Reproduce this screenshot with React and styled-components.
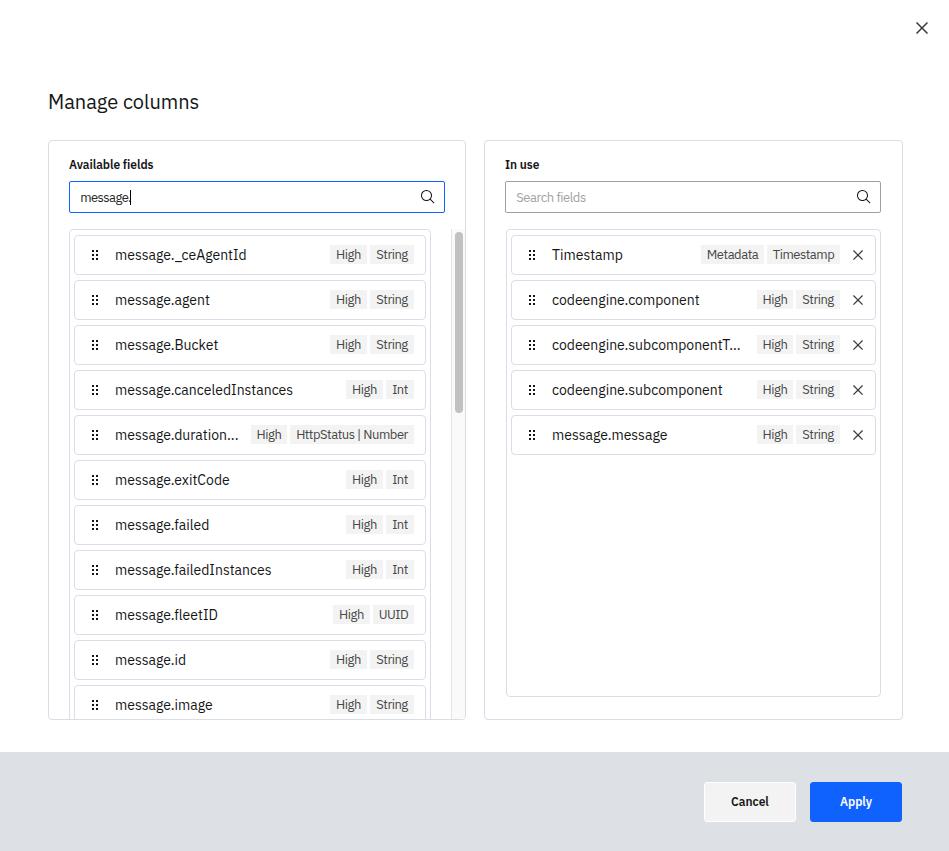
import React from "react";
import styled, { createGlobalStyle } from "styled-components";

const GlobalStyle = createGlobalStyle`
  * { box-sizing: border-box; }
  html, body { margin: 0; padding: 0; background: #fff; }
  body { font-family: "IBM Plex Sans", Roboto, "Noto Sans", sans-serif; color: #161616; overflow: hidden; }
  button { font-family: inherit; }
`;

const Dialog = styled.div`
  width: 949px;
  height: 851px;
  display: flex;
  flex-direction: column;
  background: #fff;
`;

const TopBar = styled.header`
  height: 56px;
  flex: none;
  display: flex;
  align-items: center;
  justify-content: flex-end;
  padding-right: 15px;
`;

const IconButton = styled.button`
  display: flex;
  align-items: center;
  justify-content: center;
  width: ${(p) => p.$size}px;
  height: ${(p) => p.$size}px;
  padding: 0;
  border: 0;
  background: none;
  color: #393939;
`;

const Title = styled.h1`
  margin: 32px 0 0 48px;
  height: 52px;
  flex: none;
  font-size: 20px;
  line-height: 28px;
  font-weight: 400;
  letter-spacing: -0.03px;
`;

const Panels = styled.main`
  flex: none;
  display: grid;
  grid-template-columns: 418px 419px;
  column-gap: 18px;
  height: 580px;
  padding-left: 48px;
`;

const Panel = styled.section`
  display: flex;
  flex-direction: column;
  min-height: 0;
  border: 1px solid #d9dde8;
  border-radius: 4px;
  overflow: hidden;
`;

const PanelTitle = styled.h2`
  margin: 14px 20px 6px;
  flex: none;
  font-size: 12px;
  line-height: 20px;
  font-weight: 600;
  letter-spacing: -0.06px;
`;

const SearchBox = styled.div`
  display: flex;
  flex: none;
  align-items: center;
  width: 376px;
  height: 32px;
  margin-left: 20px;
  padding: 0 8px 0 10px;
  border: 1px solid ${(p) => (p.$active ? "#0f62fe" : "#9aa1ad")};
  border-radius: 2px;
  font-size: 13px;
  line-height: 16px;
  letter-spacing: ${(p) => (p.$active ? -0.56 : -0.44)}px;
  color: ${(p) => (p.$active ? "#262626" : "#a2a2a2")};
`;

const SearchText = styled.span`
  padding: 1px 0 0 0.2px;
`;

const Caret = styled.span`
  width: 1px;
  height: 15px;
  margin-left: -0.8px;
  background: #000;
`;

const SearchIconSlot = styled.span`
  display: flex;
  margin-left: auto;
  color: #161616;
`;

const ScrollArea = styled.div`
  display: flex;
  justify-content: space-between;
  flex: 1;
  min-height: 0;
  margin: 16px 0 0 20px;
  overflow: hidden;
`;

const FieldList = styled.ul`
  width: 362px;
  height: 700px;
  margin: 0;
  padding: 5px 4px;
  list-style: none;
  border: 1px solid #d9dde8;
  border-radius: 4px;
  display: flex;
  flex-direction: column;
  gap: 5px;
`;

const InUseList = styled(FieldList)`
  width: 375px;
  height: 468px;
  margin: 16px 0 0 21px;
`;

const Row = styled.li`
  display: flex;
  align-items: center;
  flex: none;
  height: 40px;
  padding: 0 ${(p) => (p.$removable ? 9 : 11)}px 0 12px;
  border: 1px solid #d9dde8;
  border-radius: 4px;
`;

const FieldName = styled.span`
  flex: 1;
  min-width: 0;
  margin-left: 12px;
  font-size: 14px;
  line-height: 20px;
  white-space: nowrap;
`;

const Tags = styled.span`
  display: flex;
  gap: 3px;
  margin-bottom: 1px;
`;

const Tag = styled.span`
  width: ${(p) => p.$width}px;
  height: 19px;
  background: #f3f3f3;
  color: #474747;
  font-size: 13px;
  line-height: 19px;
  letter-spacing: -0.47px;
  text-align: center;
  white-space: nowrap;
`;

const Remove = styled(IconButton)`
  margin-left: 10px;
`;

const ScrollTrack = styled.div`
  width: 14px;
  padding: 3px 0 0 3px;
  background: #fafafa;
  border-left: 1px solid #e4e4e8;
`;

const ScrollThumb = styled.div`
  width: 8px;
  height: 181px;
  border-radius: 4px;
  background: #c1c1c1;
`;

const Footer = styled.footer`
  display: flex;
  justify-content: flex-end;
  gap: 14px;
  margin-top: 32px;
  height: 99px;
  padding: 30px 47px 0 0;
  background: #dde0e5;
`;

const ActionButton = styled.button`
  width: 92px;
  height: 40px;
  padding: 0;
  border: 1px solid ${(p) => (p.$primary ? "#0f62fe" : "#fff")};
  border-radius: 3px;
  background: ${(p) => (p.$primary ? "#0f62fe" : "#f3f3f3")};
  color: ${(p) => (p.$primary ? "#fff" : "#161616")};
  font-size: 12px;
  line-height: 16px;
  font-weight: 600;
`;

const CloseGlyph = styled.svg`
  flex: none;
`;

const CloseIcon = ({ size }) => (
  <CloseGlyph width={size} height={size} viewBox="0 0 32 32" fill="currentColor">
    <path d="M24 9.4 22.6 8 16 14.6 9.4 8 8 9.4l6.6 6.6L8 22.6 9.4 24l6.6-6.6 6.6 6.6 1.4-1.4-6.6-6.6z" />
  </CloseGlyph>
);

const SearchIcon = () => (
  <svg width="16" height="16" viewBox="0 0 32 32" fill="currentColor">
    <path d="m29 27.586-7.552-7.552a11.018 11.018 0 1 0-1.414 1.414L27.586 29ZM4 13a9 9 0 1 1 9 9 9.01 9.01 0 0 1-9-9Z" />
  </svg>
);

const DragIcon = () => (
  <svg width="16" height="16" viewBox="0 0 16 16" fill="#161616" shapeRendering="crispEdges">
    {[3, 7, 11].map((y) => (
      <React.Fragment key={y}>
        <rect x="5" y={y} width="2" height="2" />
        <rect x="9" y={y} width="2" height="2" />
      </React.Fragment>
    ))}
  </svg>
);

const HIGH = ["High", 37];
const HIGH_NARROW = ["High", 36];
const STRING = ["String", 44];
const INT = ["Int", 28];

const available = [
  ["message._ceAgentId", [HIGH, STRING]],
  ["message.agent", [HIGH, STRING]],
  ["message.Bucket", [HIGH, STRING]],
  ["message.canceledInstances", [HIGH, INT]],
  ["message.duration...", [HIGH_NARROW, ["HttpStatus | Number", 124]]],
  ["message.exitCode", [HIGH, INT]],
  ["message.failed", [HIGH, INT]],
  ["message.failedInstances", [HIGH, INT]],
  ["message.fleetID", [HIGH, ["UUID", 41]]],
  ["message.id", [HIGH, STRING]],
  ["message.image", [HIGH, STRING]],
];

const inUse = [
  ["Timestamp", [["Metadata", 63], ["Timestamp", 73]]],
  ["codeengine.component", [HIGH_NARROW, STRING]],
  ["codeengine.subcomponentT...", [HIGH_NARROW, STRING]],
  ["codeengine.subcomponent", [HIGH_NARROW, STRING]],
  ["message.message", [HIGH_NARROW, STRING]],
];

const Field = ({ field: [name, tags], removable }) => (
  <Row $removable={removable}>
    <DragIcon />
    <FieldName>{name}</FieldName>
    <Tags>
      {tags.map(([label, width]) => (
        <Tag key={label} $width={width}>{label}</Tag>
      ))}
    </Tags>
    {removable && (
      <Remove $size={16} aria-label={`Remove ${name}`}>
        <CloseIcon size={20} />
      </Remove>
    )}
  </Row>
);

export default function App() {
  return (
    <>
      <GlobalStyle />
      <Dialog role="dialog">
        <TopBar>
          <IconButton $size={24} aria-label="Close"><CloseIcon size={24} /></IconButton>
        </TopBar>
        <Title>Manage columns</Title>
        <Panels>
          <Panel>
            <PanelTitle>Available fields</PanelTitle>
            <SearchBox $active>
              <SearchText>message.</SearchText>
              <Caret />
              <SearchIconSlot><SearchIcon /></SearchIconSlot>
            </SearchBox>
            <ScrollArea>
              <FieldList>
                {available.map((f) => <Field key={f[0]} field={f} />)}
              </FieldList>
              <ScrollTrack><ScrollThumb /></ScrollTrack>
            </ScrollArea>
          </Panel>
          <Panel>
            <PanelTitle>In use</PanelTitle>
            <SearchBox>
              <SearchText>Search fields</SearchText>
              <SearchIconSlot><SearchIcon /></SearchIconSlot>
            </SearchBox>
            <InUseList>
              {inUse.map((f) => <Field key={f[0]} field={f} removable />)}
            </InUseList>
          </Panel>
        </Panels>
        <Footer>
          <ActionButton>Cancel</ActionButton>
          <ActionButton $primary>Apply</ActionButton>
        </Footer>
      </Dialog>
    </>
  );
}
